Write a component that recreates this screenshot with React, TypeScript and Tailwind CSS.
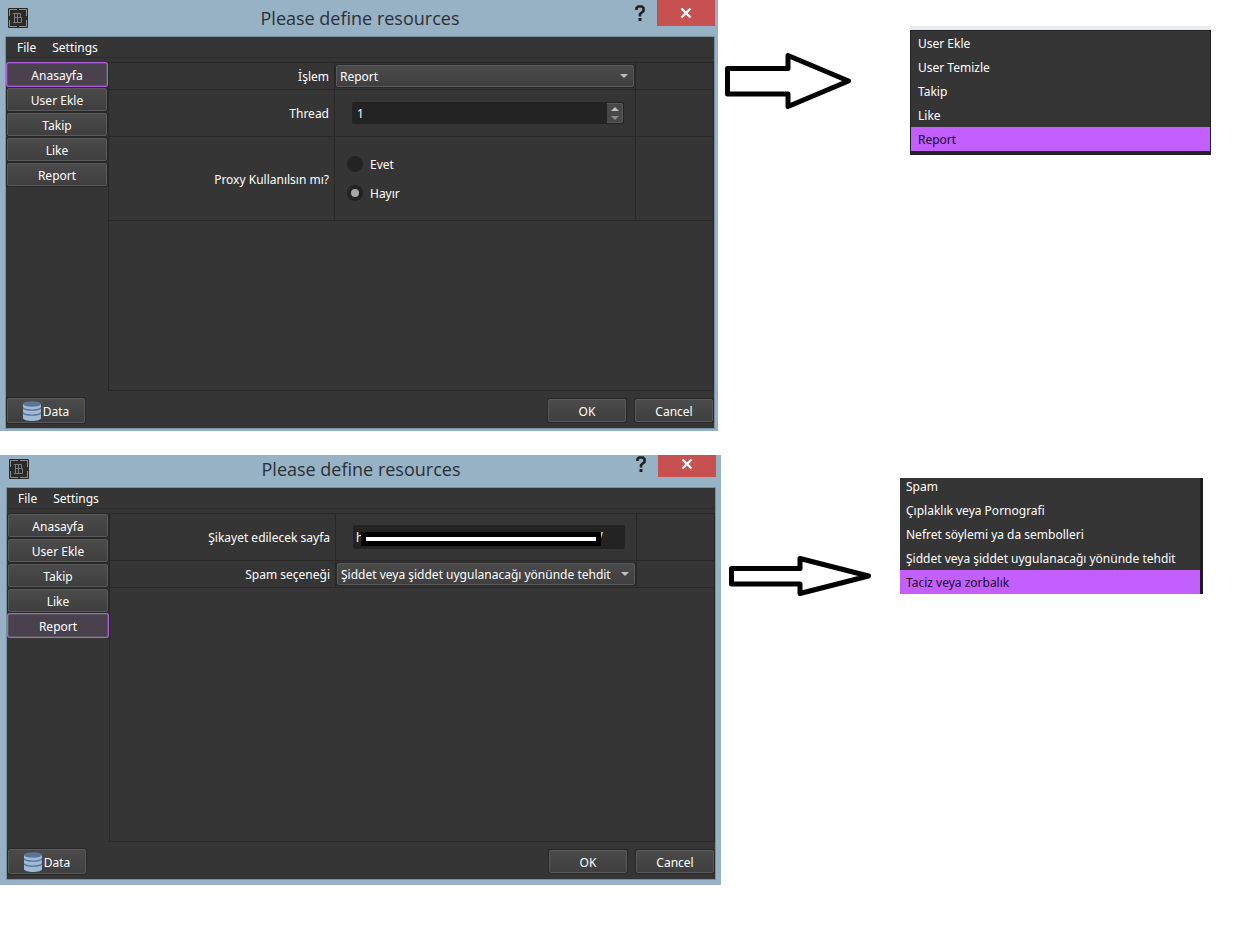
import React, { useState } from "react";

const pages = ["Anasayfa", "User Ekle", "Takip", "Like", "Report"];

const actions = ["User Ekle", "User Temizle", "Takip", "Like", "Report"];

const spamOptions = [
  "Spam",
  "Çıplaklık veya Pornografi",
  "Nefret söylemi ya da sembolleri",
  "Şiddet veya şiddet uygulanacağı yönünde tehdit",
  "Taciz veya zorbalık",
];

const raised =
  "rounded-[2px] border border-[#5a5a5a] bg-linear-to-b from-[#4b4b4b] to-[#3f3f3f] shadow-[0_0_0_1px_#282828]";

const AppIcon = () => (
  <svg viewBox="0 0 20 20" className="size-5" fill="none">
    <rect width="20" height="20" rx="1" fill="#2a2a2a" />
    <path d="M1.500 8V1.500H9M11 1.500h7.500V8M18.500 12v6.500H11M9 18.500H1.500V12" stroke="#8e8e8e" />
    <path
      d="M5 5.500h7.500v4H7M6.500 5v10M5 14.500h8.500v-5H12M9.500 6v8"
      stroke="#7c7c7c"
    />
  </svg>
);

const DatabaseIcon = () => (
  <svg viewBox="0 0 18 20" className="h-5 w-[18px]">
    <path d="M0 3v14c0 4 18 4 18 0V3z" fill="#9fb9d6" />
    <ellipse cx="9" cy="3" rx="9" ry="2.700" fill="#587596" />
    <path
      d="M0 6.500c1 3.500 17 3.500 18 0M0 11.500c1 3.500 17 3.500 18 0"
      stroke="#587596"
      strokeWidth="1.300"
      fill="none"
    />
  </svg>
);

type TitleBarProps = { barClass: string; helpClass: string; closeClass: string };

const TitleBar = ({ barClass, helpClass, closeClass }: TitleBarProps) => (
  <header className={`grid grid-cols-[1fr_auto_1fr] ${barClass}`}>
    <div className="self-center pl-[3px]">
      <AppIcon />
    </div>
    <h1 className="self-center font-['Open_Sans','Noto_Sans',sans-serif] text-[18px] leading-6 text-[#2b3036]">
      Please define resources
    </h1>
    <div className="flex items-start justify-end">
      <button type="button" aria-label="Help" className={`mr-3 ${helpClass}`}>
        <svg viewBox="0 0 10 16" className="h-4 w-[10px]" fill="none">
          <path d="M1.500 5V3l1.500-1.500h4L8.500 3v3L5 9v2.500" stroke="#222" strokeWidth="2.600" />
          <path d="M3.500 13h3v3h-3z" fill="#222" />
        </svg>
      </button>
      <button
        type="button"
        aria-label="Close"
        className={`flex w-[58px] justify-center bg-[#c75050] ${closeClass}`}>
        <svg viewBox="0 0 12 10" className="h-[10px] w-3">
          <path d="M1.500.5l9 9M10.500.5l-9 9" stroke="#fff" strokeWidth="2.200" />
        </svg>
      </button>
    </div>
  </header>
);

type WindowProps = TitleBarProps & {
  frameClass: string;
  initialPage: string;
  children: React.ReactNode;
};

const DialogWindow = ({
  frameClass,
  barClass,
  helpClass,
  closeClass,
  initialPage,
  children,
}: WindowProps) => {
  const [page, setPage] = useState(initialPage);

  return (
    <section className={`bg-[#97b2c5] ${frameClass}`}>
      <TitleBar barClass={barClass} helpClass={helpClass} closeClass={closeClass} />
      <div className="border border-[#7790a0] bg-[#353535]">
        <nav className="flex h-[21px] gap-4 border-b border-[#2c2c2c] pt-px pl-[11px]">
          <button type="button">File</button>
          <button type="button">Settings</button>
        </nav>
        <div className="mt-1 flex">
          <div className="flex w-[102px] flex-col gap-[2px] px-px pt-px">
            {pages.map((name) => (
              <button
                key={name}
                type="button"
                onClick={() => setPage(name)}
                className={`h-[23px] pt-0.5 ${
                  page === name
                    ? "rounded-[2px] border border-[#5a5560] bg-[#49414d] shadow-[0_0_0_1px_#b060dc]"
                    : raised
                }`}>
                {name}
              </button>
            ))}
          </div>
          <div className="min-h-[329px] flex-1 border border-[#282828]">{children}</div>
        </div>
        <footer className="flex items-center gap-[9px] px-px pt-[7px] pb-[5px]">
          <button
            type="button"
            className={`mr-auto flex h-[25px] w-[78px] items-center justify-center gap-0.5 ${raised}`}>
            <DatabaseIcon />
            <span className="pt-0.5">Data</span>
          </button>
          <button type="button" className={`h-[23px] w-[78px] pt-0.5 ${raised}`}>
            OK
          </button>
          <button type="button" className={`h-[23px] w-[78px] pt-0.5 ${raised}`}>
            Cancel
          </button>
        </footer>
      </div>
    </section>
  );
};

type FormRowProps = {
  label: string;
  htmlFor?: string;
  rowClass: string;
  cellClass: string;
  children: React.ReactNode;
};

const FormRow = ({ label, htmlFor, rowClass, cellClass, children }: FormRowProps) => (
  <div
    className={`grid grid-cols-[226fr_301fr_77fr] border-b border-[#282828] ${rowClass}`}>
    <div className="flex items-center justify-end border-r border-[#282828] pt-0.5 pr-[5px]">
      {htmlFor ? (
        <label htmlFor={htmlFor}>{label}</label>
      ) : (
        <span id="proxy-label">{label}</span>
      )}
    </div>
    <div className={`flex items-center border-r border-[#282828] ${cellClass}`}>{children}</div>
  </div>
);

type ComboProps = { id: string; options: string[]; initial: string };

const Combo = ({ id, options, initial }: ComboProps) => {
  const [value, setValue] = useState(initial);

  return (
    <div className="relative flex-1">
      <select
        id={id}
        value={value}
        onChange={(e) => setValue(e.target.value)}
        className={`block h-[22px] w-full appearance-none pt-px pl-[3px] ${raised}`}>
        {options.map((option) => (
          <option key={option}>{option}</option>
        ))}
      </select>
      <svg
        viewBox="0 0 8 4"
        className="pointer-events-none absolute top-[9px] right-[6px] h-1 w-2">
        <path d="M0 0h8L4 4z" fill="#c0c0c0" />
      </svg>
    </div>
  );
};

const ThreadInput = () => {
  const [count, setCount] = useState(1);

  return (
    <div className="flex h-[22px] flex-1 rounded-[2px] bg-[#232323]">
      <input
        id="thread"
        type="text"
        inputMode="numeric"
        value={count}
        onChange={(e) => setCount(Number(e.target.value) || 1)}
        className="min-w-0 flex-1 pt-0.5 pl-[5px] outline-none"
      />
      <div className="m-px flex w-4 flex-col rounded-r-[2px] border border-l-0 border-[#5a5a5a] bg-[#474747]">
        <button
          type="button"
          aria-label="Increase"
          onClick={() => setCount(count + 1)}
          className="flex flex-1 items-center justify-center">
          <svg viewBox="0 0 8 4" className="h-1 w-2">
            <path d="M0 4h8L4 0z" fill="#c0c0c0" />
          </svg>
        </button>
        <button
          type="button"
          aria-label="Decrease"
          onClick={() => setCount(Math.max(1, count - 1))}
          className="flex flex-1 items-center justify-center">
          <svg viewBox="0 0 8 4" className="h-1 w-2">
            <path d="M0 0h8L4 4z" fill="#8c8c8c" />
          </svg>
        </button>
      </div>
    </div>
  );
};

const ProxyChoice = () => {
  const [choice, setChoice] = useState("Hayır");

  return (
    <div role="radiogroup" aria-labelledby="proxy-label" className="flex flex-col gap-[13px]">
      {["Evet", "Hayır"].map((name) => (
        <label key={name} className="flex h-4 items-center gap-[7px]">
          <input
            type="radio"
            name="proxy"
            checked={choice === name}
            onChange={() => setChoice(name)}
            className="size-4 appearance-none rounded-full border-4 border-[#232323] bg-[#232323] checked:bg-[#a8a8a8]"
          />
          <span className="pt-0.5">{name}</span>
        </label>
      ))}
    </div>
  );
};

const PageInput = () => {
  const [url, setUrl] = useState("h");

  return (
    <div className="relative flex h-6 flex-1 rounded-[2px] bg-[#232323]">
      <input
        id="page"
        type="text"
        value={url}
        onChange={(e) => setUrl(e.target.value)}
        className="min-w-0 flex-1 pt-0.5 pl-[3px] outline-none"
      />
      {/* censor bar over the address */}
      <div className="pointer-events-none absolute inset-y-0 right-[22px] left-2 flex items-center">
        <div className="z-10 mt-[3px] h-[14px] flex-1 border-5 border-black bg-white" />
        <span className="-ml-[2px]">/</span>
      </div>
    </div>
  );
};

type OptionListProps = {
  options: string[];
  selected: string;
  listClass: string;
  itemClass: string;
};

const OptionList = ({ options, selected, listClass, itemClass }: OptionListProps) => (
  <ul className={`bg-[#353535] ${listClass}`}>
    {options.map((option) => (
      <li
        key={option}
        className={`h-6 leading-[26px] ${itemClass} ${
          option === selected ? "bg-[#c45fff] text-[#180820]" : ""
        }`}>
        {option}
      </li>
    ))}
  </ul>
);

const App: React.FC = () => {
  return (
    <main className="min-h-screen bg-white font-['Noto_Sans','Open_Sans',sans-serif] text-[12px] leading-5 text-white">
      <div className="grid grid-cols-[718fr_526fr] items-start">
        <DialogWindow
          frameClass="pl-[5px] pr-[3px] pb-[2px]"
          barClass="h-9"
          helpClass="pt-[5px]"
          closeClass="h-[26px] pt-2"
          initialPage="Anasayfa">
          <FormRow label="İşlem" htmlFor="action" rowClass="h-[27px]" cellClass="px-px">
            <Combo id="action" options={actions} initial="Report" />
          </FormRow>
          <FormRow label="Thread" htmlFor="thread" rowClass="h-[47px]" cellClass="pr-[11px] pl-[17px]">
            <ThreadInput />
          </FormRow>
          <FormRow label="Proxy Kullanılsın mı?" rowClass="h-[84px]" cellClass="pl-3">
            <ProxyChoice />
          </FormRow>
        </DialogWindow>
        <div className="flex items-start pl-[7px]">
          <svg viewBox="0 0 126 56" className="mt-[53px] h-14 w-[126px]" fill="none">
            <path
              d="M2.500 15.500H63V2.500L123.500 28 63 53.500V41H2.500z"
              stroke="#000"
              strokeWidth="5"
              strokeLinejoin="round"
            />
          </svg>
          <div className="mt-[26px] mr-[33px] ml-auto w-[301px] border-t-4 border-[#e8ebed]">
            <OptionList
              options={actions}
              selected="Report"
              listClass="border border-b-4 border-[#222]"
              itemClass="pl-[7px]"
            />
          </div>
        </div>
      </div>

      <div className="mt-6 grid grid-cols-[721fr_523fr] items-start">
        <DialogWindow
          frameClass="pl-[6px] pr-[5px] pb-[5px]"
          barClass="h-8 pb-1"
          helpClass="pt-px"
          closeClass="h-[22px] pt-1"
          initialPage="Report">
          <FormRow label="Şikayet edilecek sayfa" htmlFor="page" rowClass="h-[47px]" cellClass="pr-[11px] pl-[17px]">
            <PageInput />
          </FormRow>
          <FormRow label="Spam seçeneği" htmlFor="spam" rowClass="h-[27px]" cellClass="px-px">
            <Combo id="spam" options={spamOptions} initial={spamOptions[3]} />
          </FormRow>
        </DialogWindow>
        <div className="flex items-start pl-2">
          <svg viewBox="0 0 142 40" className="mt-[101px] h-10 w-[142px]" fill="none">
            <path
              d="M2.500 12.500H71V2.500L139.500 20 71 37.500V28H2.500z"
              stroke="#000"
              strokeWidth="5"
              strokeLinejoin="round"
            />
          </svg>
          <div className="mt-[23px] mr-[41px] ml-auto flex h-[116px] w-[303px] flex-col justify-end overflow-hidden border-r-3 border-[#1e1e1e]">
            <OptionList
              options={spamOptions}
              selected="Taciz veya zorbalık"
              listClass=""
              itemClass="pl-[6px]"
            />
          </div>
        </div>
      </div>
    </main>
  );
};

export default App;
